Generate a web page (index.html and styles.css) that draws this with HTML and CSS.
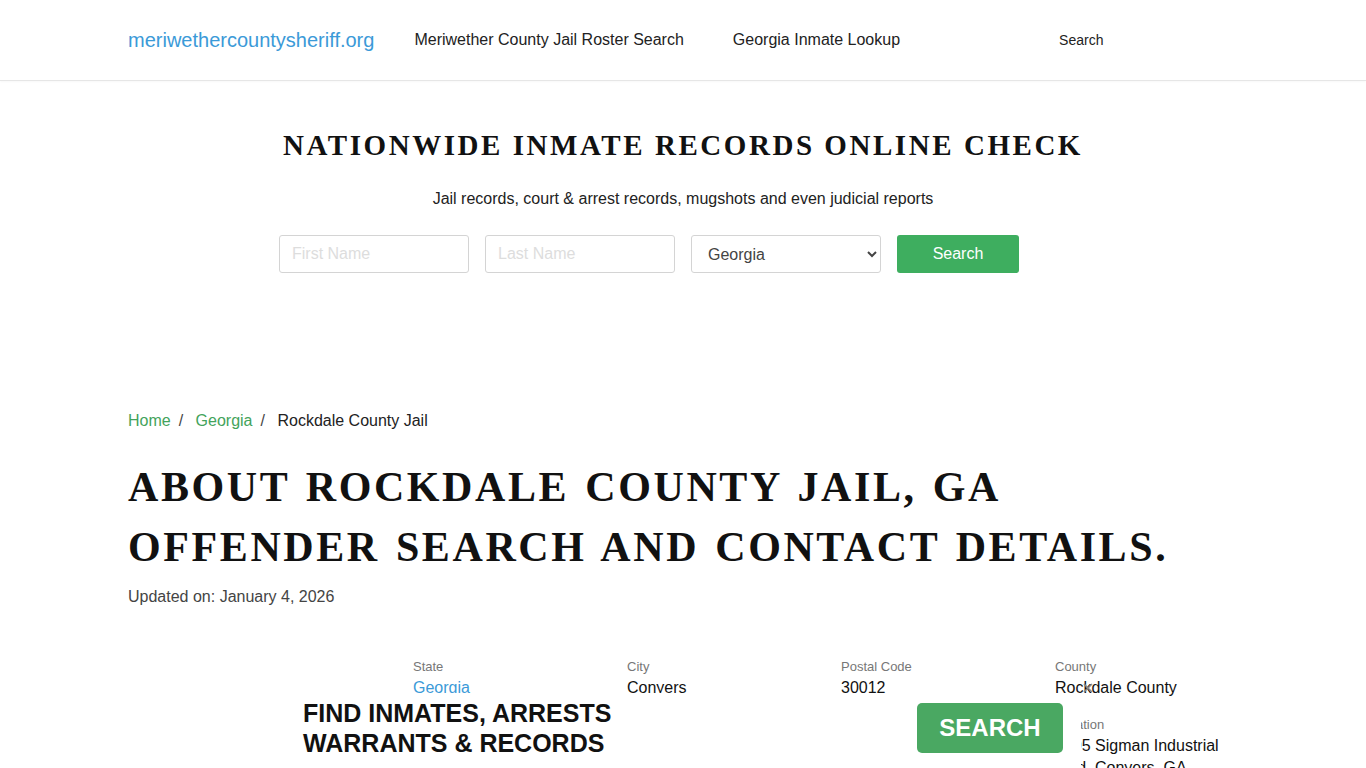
FILE: index.html
```html
<!DOCTYPE html>
<html lang="en">
<head>
<meta charset="utf-8">
<title>Rockdale County Jail</title>
<link rel="stylesheet" href="styles.css">
</head>
<body>
<header class="site-header">
  <div class="container header-row">
    <a class="brand" href="#">meriwethercountysheriff.org</a>
    <nav class="nav">
      <a href="#" class="nav-link">Meriwether County Jail Roster Search</a>
      <a href="#" class="nav-link">Georgia Inmate Lookup</a>
    </nav>
    <a href="#" class="nav-search">Search</a>
  </div>
</header>

<section class="hero">
  <h2 class="hero-title">NATIONWIDE INMATE RECORDS ONLINE CHECK</h2>
  <p class="hero-sub">Jail records, court &amp; arrest records, mugshots and even judicial reports</p>
  <form class="hero-form">
    <input class="field" type="text" placeholder="First Name">
    <input class="field" type="text" placeholder="Last Name">
    <select class="field select">
      <option>Georgia</option>
    </select>
    <button type="button" class="btn-green">Search</button>
  </form>
</section>

<main class="container main">
  <div class="crumbs">
    <a href="#" class="crumb-link">Home</a><span class="sep">/</span>
    <a href="#" class="crumb-link">Georgia</a><span class="sep">/</span>
    <span class="crumb-current">Rockdale County Jail</span>
  </div>
  <h1 class="page-title">ABOUT ROCKDALE COUNTY JAIL, GA OFFENDER SEARCH AND CONTACT DETAILS.</h1>
  <p class="updated">Updated on: January 4, 2026</p>

  <div class="info-grid">
    <div class="info"><div class="info-label">State</div><a href="#" class="info-value link">Georgia</a></div>
    <div class="info"><div class="info-label">City</div><div class="info-value">Conyers</div></div>
    <div class="info"><div class="info-label">Postal Code</div><div class="info-value">30012</div></div>
    <div class="info"><div class="info-label">County</div><div class="info-value">Rockdale County</div></div>
    <div class="info"></div>
    <div class="info"></div>
    <div class="info"></div>
    <div class="info"><div class="info-label">Location</div><div class="info-value">2305 Sigman Industrial Blvd, Conyers, GA 30012</div></div>
  </div>
</main>

<div class="banner">
  <div class="banner-text">FIND INMATES, ARRESTS<br>WARRANTS &amp; RECORDS</div>
  <button type="button" class="banner-btn">SEARCH</button>
  <span class="banner-close">
    <svg width="10" height="10" viewBox="0 0 10 10"><path d="M1 1 L9 9 M9 1 L1 9" stroke="#8a8a8a" stroke-width="1.6" fill="none"/></svg>
  </span>
</div>
</body>
</html>
```

FILE: styles.css
```css
* { box-sizing: border-box; }
html, body { margin: 0; padding: 0; }
body {
  font-family: "Liberation Sans", Arial, sans-serif;
  color: #222;
  background: #fff;
  font-size: 16px;
}
a { text-decoration: none; }
.container { width: 1110px; margin: 0 auto; }

.site-header {
  height: 81px;
  border-bottom: 1px solid #e6e6e6;
  box-shadow: 0 1px 2px rgba(0,0,0,0.03);
}
.header-row {
  display: flex;
  align-items: center;
  height: 80px;
}
.brand {
  font-size: 20px;
  color: #3b9ad8;
  margin-right: 40px;
}
.nav { display: flex; gap: 49px; }
.nav-link { color: #222; font-size: 16px; }
.nav-search {
  margin-left: 159px;
  color: #222;
  font-size: 14px;
}

.hero { text-align: center; padding-top: 47px; }
.hero-title {
  font-family: "Liberation Serif", "Times New Roman", serif;
  font-weight: bold;
  font-size: 29px;
  letter-spacing: 2.55px;
  color: #111;
  margin: 0;
  line-height: 34px;
}
.hero-sub { margin: 27px 0 0; font-size: 16px; line-height: 20px; color: #222; }
.hero-form {
  display: flex;
  justify-content: center;
  gap: 16px;
  margin-top: 18px;
  padding-right: 68px;
  padding-top: 8px;
}
.field {
  width: 190px;
  height: 38px;
  border: 1px solid #d4d4d4;
  border-radius: 3px;
  padding: 0 12px;
  font-family: "Liberation Sans", Arial, sans-serif;
  font-size: 16px;
  color: #444;
  background: #fff;
}
.field::placeholder { color: #ddd; }
.select { padding: 0 12px 0 12px; }
.btn-green {
  width: 122px;
  height: 38px;
  border: none;
  border-radius: 3px;
  background: #3eae5f;
  color: #fff;
  font-family: "Liberation Sans", Arial, sans-serif;
  font-size: 16px;
}

.main { padding-top: 138px; }
.crumbs { font-size: 16px; line-height: 20px; color: #222; }
.crumb-link { color: #43a35b; }
.sep { margin: 0 8px 0 8px; color: #444; }
.page-title {
  font-family: "Liberation Serif", "Times New Roman", serif;
  font-weight: bold;
  font-size: 42px;
  letter-spacing: 2.6px;
  word-spacing: 3px;
  line-height: 60px;
  color: #111;
  margin: 26px 0 0;
  max-width: 1080px;
}
.updated { margin: 10px 0 0; color: #444; font-size: 16px; line-height: 20px; }

.info-grid {
  display: grid;
  grid-template-columns: repeat(4, 214px);
  margin: 52px 0 0 285px;
  row-gap: 18px;
}
.info-label { font-size: 13px; color: #777; line-height: 16px; }
.info-value { font-size: 16px; color: #111; line-height: 22px; margin-top: 2px; display: block; }
.info-value.link { color: #3b9ad8; }
.info:nth-child(8) .info-value { width: 170px; }

.banner {
  position: fixed;
  left: 283px;
  bottom: 0;
  width: 798px;
  height: 75px;
  background: #fff;
  display: flex;
  align-items: flex-start;
  justify-content: space-between;
  padding: 8px 18px 0 20px;
}
.banner-text {
  font-weight: bold;
  font-size: 25px;
  line-height: 30px;
  color: #111;
  margin-top: -3px;
}
.banner-btn {
  width: 146px;
  height: 50px;
  margin-top: 2px;
  border: none;
  border-radius: 5px;
  background: #4aa862;
  color: #fff;
  font-family: "Liberation Sans", Arial, sans-serif;
  font-weight: bold;
  font-size: 24px;
}
.banner-close {
  position: absolute;
  top: -10px;
  right: -12px;
  width: 10px;
  height: 10px;
  display: block;
}
.banner-close svg { display: block; }
```
